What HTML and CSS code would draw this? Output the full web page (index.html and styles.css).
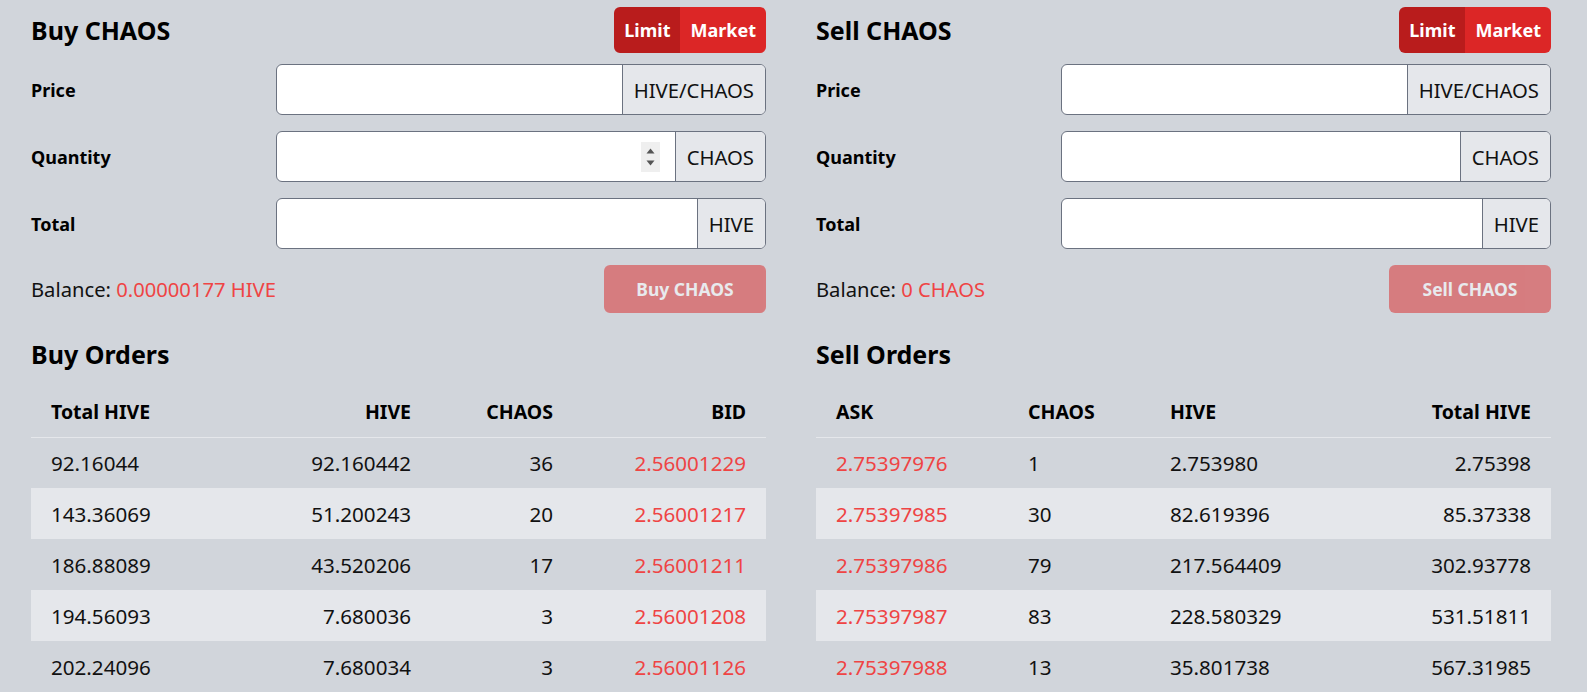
FILE: index.html
```html
<!DOCTYPE html>
<html lang="en">
<head>
<meta charset="utf-8">
<title>CHAOS / HIVE market</title>
<link rel="stylesheet" href="styles.css">
</head>
<body>
<main class="market">
  <section class="panel">
    <div class="panel-head">
      <h2 class="panel-title">Buy CHAOS</h2>
      <div class="seg">
        <button class="seg-btn seg-on" type="button">Limit</button>
        <button class="seg-btn" type="button">Market</button>
      </div>
    </div>
    <div class="form">
      <div class="form-row">
        <label class="form-label">Price</label>
        <div class="group"><input class="field" type="text"><span class="addon">HIVE/CHAOS</span></div>
      </div>
      <div class="form-row">
        <label class="form-label">Quantity</label>
        <div class="group">
          <input class="field" type="text">
          <span class="spin"><svg width="19" height="30" viewBox="0 0 19 30"><path d="M5.5 11.5 L9.5 6.5 L13.5 11.5 Z" fill="#555"/><path d="M5.5 18.5 L9.5 23.5 L13.5 18.5 Z" fill="#555"/></svg></span>
          <span class="addon">CHAOS</span>
        </div>
      </div>
      <div class="form-row">
        <label class="form-label">Total</label>
        <div class="group"><input class="field" type="text"><span class="addon">HIVE</span></div>
      </div>
    </div>
    <div class="foot">
      <span class="balance">Balance: <span class="accent">0.00000177 HIVE</span></span>
      <button class="submit" type="button" disabled>Buy CHAOS</button>
    </div>
    <h3 class="orders-title">Buy Orders</h3>
    <table class="orders">
      <colgroup><col class="w200"><col class="w200"><col class="w142"><col class="w193"></colgroup>
      <thead>
        <tr><th>Total HIVE</th><th class="r">HIVE</th><th class="r">CHAOS</th><th class="r">BID</th></tr>
      </thead>
      <tbody>
        <tr><td>92.16044</td><td class="r">92.160442</td><td class="r">36</td><td class="r accent">2.56001229</td></tr>
        <tr><td>143.36069</td><td class="r">51.200243</td><td class="r">20</td><td class="r accent">2.56001217</td></tr>
        <tr><td>186.88089</td><td class="r">43.520206</td><td class="r">17</td><td class="r accent">2.56001211</td></tr>
        <tr><td>194.56093</td><td class="r">7.680036</td><td class="r">3</td><td class="r accent">2.56001208</td></tr>
        <tr><td>202.24096</td><td class="r">7.680034</td><td class="r">3</td><td class="r accent">2.56001126</td></tr>
      </tbody>
    </table>
  </section>

  <section class="panel">
    <div class="panel-head">
      <h2 class="panel-title">Sell CHAOS</h2>
      <div class="seg">
        <button class="seg-btn seg-on" type="button">Limit</button>
        <button class="seg-btn" type="button">Market</button>
      </div>
    </div>
    <div class="form">
      <div class="form-row">
        <label class="form-label">Price</label>
        <div class="group"><input class="field" type="text"><span class="addon">HIVE/CHAOS</span></div>
      </div>
      <div class="form-row">
        <label class="form-label">Quantity</label>
        <div class="group"><input class="field" type="text"><span class="addon">CHAOS</span></div>
      </div>
      <div class="form-row">
        <label class="form-label">Total</label>
        <div class="group"><input class="field" type="text"><span class="addon">HIVE</span></div>
      </div>
    </div>
    <div class="foot">
      <span class="balance">Balance: <span class="accent">0 CHAOS</span></span>
      <button class="submit" type="button" disabled>Sell CHAOS</button>
    </div>
    <h3 class="orders-title">Sell Orders</h3>
    <table class="orders">
      <colgroup><col class="w192"><col class="w142"><col class="w200"><col class="w201"></colgroup>
      <thead>
        <tr><th>ASK</th><th>CHAOS</th><th>HIVE</th><th class="r">Total HIVE</th></tr>
      </thead>
      <tbody>
        <tr><td class="accent">2.75397976</td><td>1</td><td>2.753980</td><td class="r">2.75398</td></tr>
        <tr><td class="accent">2.75397985</td><td>30</td><td>82.619396</td><td class="r">85.37338</td></tr>
        <tr><td class="accent">2.75397986</td><td>79</td><td>217.564409</td><td class="r">302.93778</td></tr>
        <tr><td class="accent">2.75397987</td><td>83</td><td>228.580329</td><td class="r">531.51811</td></tr>
        <tr><td class="accent">2.75397988</td><td>13</td><td>35.801738</td><td class="r">567.31985</td></tr>
      </tbody>
    </table>
  </section>
</main>
</body>
</html>
```
FILE: styles.css
```css
* { box-sizing: border-box; }

body {
  margin: 0;
  background: #d1d5db;
  color: #111;
  font-family: "Noto Sans", sans-serif;
  font-size: 20px;
  overflow: hidden;
}

.market {
  display: grid;
  grid-template-columns: 735px 735px;
  column-gap: 50px;
  padding: 7px 0 0 31px;
}

.panel-head {
  display: flex;
  justify-content: space-between;
  align-items: center;
  height: 46px;
}

.panel-title {
  margin: 0;
  font-size: 25px;
  font-weight: 700;
  line-height: 30px;
  color: #000;
}

.seg {
  display: flex;
  height: 46px;
  border-radius: 6px;
  overflow: hidden;
}

.seg-btn {
  border: 0;
  margin: 0;
  padding: 0 10px;
  background: #dc2626;
  color: #fff;
  font-family: inherit;
  font-size: 18px;
  font-weight: 700;
}

.seg-on { background: #b91c1c; }

.form {
  margin-top: 11px;
  display: flex;
  flex-direction: column;
  gap: 16px;
}

.form-row {
  display: grid;
  grid-template-columns: 245px 1fr;
  align-items: center;
}

.form-label {
  font-size: 18px;
  font-weight: 700;
  color: #000;
}

.group {
  display: flex;
  align-items: center;
  height: 51px;
  border: 1px solid #6b7280;
  border-radius: 6px;
  overflow: hidden;
  background: #fff;
}

.field {
  flex: 1;
  min-width: 0;
  height: 100%;
  border: 0;
  padding: 0 16px;
  background: transparent;
  font: inherit;
  outline: none;
}

.spin {
  display: flex;
  width: 19px;
  height: 30px;
  margin-right: 15px;
  background: #efefef;
}

.addon {
  display: flex;
  align-items: center;
  align-self: stretch;
  padding: 0 11px;
  background: #e5e7eb;
  border-left: 1px solid #6b7280;
  font-size: 20.3px;
}

.foot {
  margin-top: 16px;
  display: flex;
  justify-content: space-between;
  align-items: center;
}

.balance { font-size: 20.2px; }

.accent { color: #ef4444; }

.submit {
  width: 162px;
  height: 48px;
  border: 0;
  border-radius: 6px;
  background: #dc2626;
  color: #fff;
  opacity: 0.5;
  font-family: inherit;
  font-size: 17.5px;
  font-weight: 700;
}

.orders-title {
  margin: 26px 0 0;
  font-size: 25px;
  font-weight: 700;
  line-height: 30px;
  color: #000;
}

.orders {
  margin-top: 17px;
  width: 100%;
  border-collapse: collapse;
  table-layout: fixed;
}

.w200 { width: 200px; }
.w201 { width: 201px; }
.w192 { width: 192px; }
.w193 { width: 193px; }
.w142 { width: 142px; }

.orders th {
  height: 51px;
  padding: 0 20px;
  text-align: left;
  font-size: 19.5px;
  font-weight: 700;
  color: #000;
  border-bottom: 1px solid #e5e7eb;
}

.orders td {
  height: 51px;
  padding: 0 20px;
  font-size: 20.6px;
}

.orders tbody tr:nth-child(even) { background: #e5e7eb; }

.orders .r { text-align: right; }
```
